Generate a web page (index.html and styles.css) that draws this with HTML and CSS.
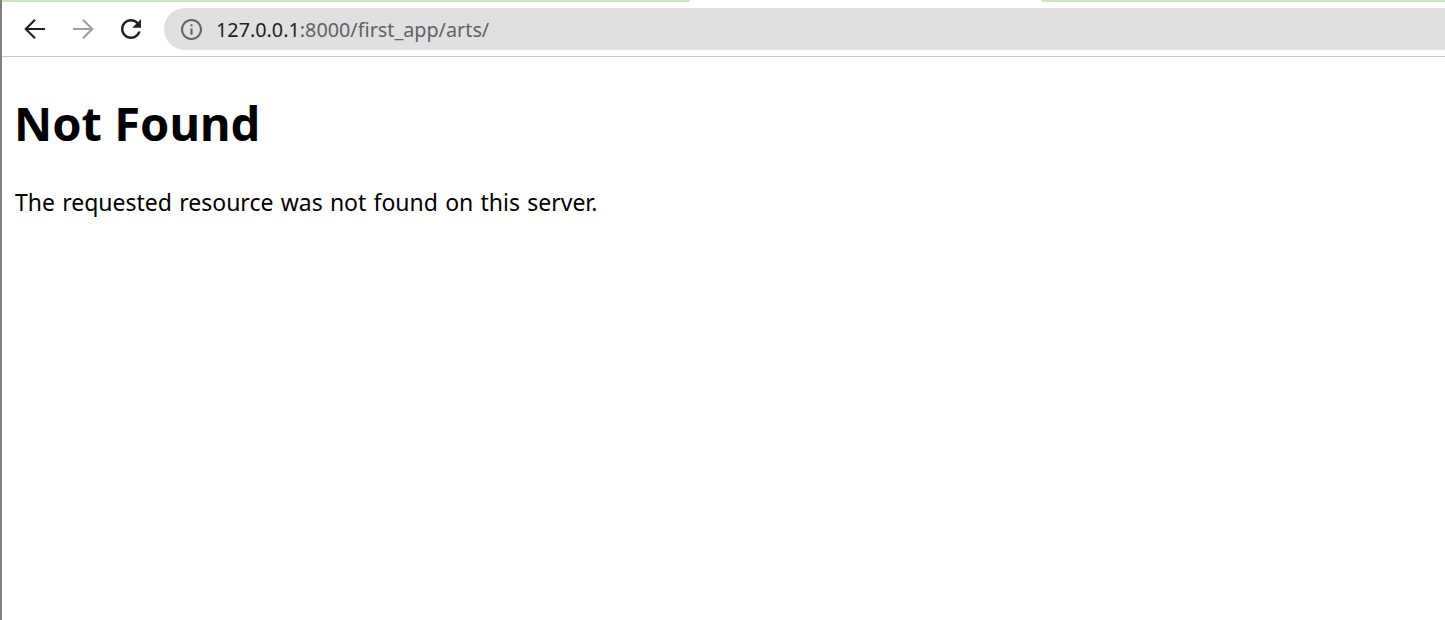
FILE: index.html
```html
<!DOCTYPE html>
<html lang="en">
<head>
  <meta charset="UTF-8">
  <title>Not Found</title>
  <link rel="stylesheet" href="styles.css">
</head>
<body>
  <div class="edge"></div>
  <div class="window">
    <div class="tabs">
      <div class="tab tab-left"></div>
      <div class="tab tab-right"></div>
    </div>
    <div class="toolbar">
      <div class="nav">
        <svg width="24" height="24" viewBox="2.4 2.4 19.2 19.2"><path d="M20 12H5M12 4.600L4.600 12l7.400 7.400" fill="none" stroke="#202124" stroke-width="1.700"/></svg>
      </div>
      <div class="nav">
        <svg width="24" height="24" viewBox="2.4 2.4 19.2 19.2"><path d="M4 12h15M12 4.600l7.400 7.400-7.400 7.400" fill="none" stroke="#a0a1a3" stroke-width="1.700"/></svg>
      </div>
      <div class="nav">
        <svg width="24" height="24" viewBox="2.4 2.4 19.2 19.2"><path d="M17.650 6.350C16.200 4.900 14.210 4 12 4c-4.420 0-7.990 3.580-7.990 8s3.570 8 7.990 8c3.730 0 6.840-2.550 7.730-6h-2.080c-.82 2.330-3.040 4-5.650 4-3.310 0-6-2.690-6-6s2.690-6 6-6c1.660 0 3.140.69 4.220 1.780L13 11h7V4l-2.350 2.350z" fill="#202124"/></svg>
      </div>
      <div class="address">
        <svg class="info" width="21" height="21" viewBox="2 2 20 20"><path d="M11 7h2v2h-2zm0 4h2v6h-2zm1-9C6.480 2 2 6.480 2 12s4.480 10 10 10 10-4.480 10-10S17.520 2 12 2zm0 18c-4.410 0-8-3.590-8-8s3.590-8 8-8 8 3.590 8 8-3.590 8-8 8z" fill="#5f6368"/></svg>
        <span class="url"><span class="host">127.0.0.1</span>:8000/first_app/arts/</span>
      </div>
    </div>
    <main class="page">
      <h1>Not Found</h1>
      <p>The requested resource was not found on this server.</p>
    </main>
  </div>
</body>
</html>
```

FILE: styles.css
```css
html, body {
  height: 100%;
}
body {
  margin: 0;
  display: flex;
  overflow: hidden;
  background: white;
  color: black;
  font-family: "Noto Sans", sans-serif;
}
.edge {
  width: 2px;
  background: #808080;
}
.window {
  flex: 1;
  min-width: 0;
}
.tabs {
  display: flex;
  justify-content: space-between;
  height: 2px;
}
.tab {
  background: #c8e6c0;
}
.tab-left {
  width: 688px;
  border-bottom-right-radius: 6px;
}
.tab-right {
  width: 404px;
  border-bottom-left-radius: 6px;
}
.toolbar {
  display: flex;
  align-items: center;
  height: 54px;
  padding-left: 9px;
  border-bottom: 1px solid #c8c8c8;
}
.nav {
  display: flex;
  justify-content: center;
  width: 48px;
  flex: none;
}
.address {
  flex: 1;
  display: flex;
  align-items: center;
  height: 42px;
  margin-left: 9px;
  padding-left: 17px;
  border-radius: 21px 0 0 21px;
  background: #e0e0e0;
}
.info {
  flex: none;
}
.url {
  margin-left: 14px;
  padding-top: 1px;
  font-size: 19.800px;
  color: #5f6368;
}
.host {
  color: #202124;
}
.page {
  padding: 0 13px;
}
h1 {
  margin: 32px 0 0 -1px;
  font-size: 47px;
  line-height: 68px;
  font-weight: bold;
}
p {
  margin: 29px 0 0;
  font-size: 23px;
  line-height: 32px;
  word-spacing: 1.250px;
}
```
